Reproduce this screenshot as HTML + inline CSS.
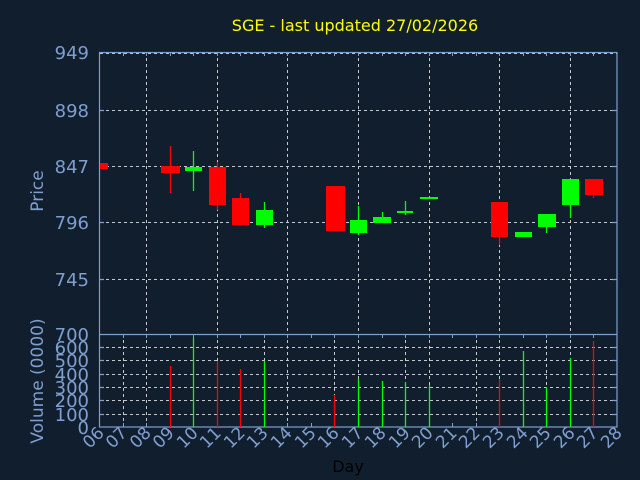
<!DOCTYPE html>
<html><head><style>html,body{margin:0;padding:0;background:#111e2e;}svg{display:block}</style></head>
<body>
<svg width="640" height="480" xmlns="http://www.w3.org/2000/svg" font-family="DejaVu Sans, Liberation Sans, sans-serif">
<rect width="640" height="480" fill="#111e2e"/>
<text x="355" y="31" fill="#ffff00" font-size="16" text-anchor="middle">SGE - last updated 27/02/2026</text>
<g stroke="#c8c8c8" stroke-width="1" stroke-dasharray="3,3" fill="none">
<path d="M100 53.5H617M100 110.5H617M100 166.5H617M100 222.5H617M100 279.5H617"/>
<path d="M100 347.5H617M100 360.5H617M100 374.5H617M100 387.5H617M100 400.5H617M100 414.5H617"/>
<path d="M146.5 52V427M217.5 52V427M287.5 52V427M358.5 52V427M429.5 52V427M499.5 52V427M570.5 52V427"/>
<path d="M123.5 334V427M193.5 334V427M264.5 334V427M334.5 334V427M405.5 334V427M476.5 334V427M546.5 334V427"/>
</g>
<g stroke="#7f9fcf" stroke-width="1.2" fill="none">
<rect x="99.5" y="52.5" width="517.5" height="374.5"/>
<path d="M99.5 334.5H617"/>
<path d="M99 110.5h5M99 166.5h5M99 222.5h5M99 279.5h5M612 110.5h5M612 166.5h5M612 222.5h5M612 279.5h5"/>
<path d="M99 347.5h5M99 360.5h5M99 374.5h5M99 387.5h5M99 400.5h5M99 414.5h5M612 347.5h5M612 360.5h5M612 374.5h5M612 387.5h5M612 400.5h5M612 414.5h5"/>
</g>
<g fill="#7f9fcf" font-size="18" text-anchor="end">
<text x="89" y="59">949</text><text x="89" y="117">898</text><text x="89" y="173">847</text><text x="89" y="229">796</text><text x="89" y="286">745</text>
<text x="89" y="341">700</text><text x="89" y="354">600</text><text x="89" y="367">500</text><text x="89" y="381">400</text><text x="89" y="394">300</text><text x="89" y="407">200</text><text x="89" y="421">100</text><text x="89" y="434">0</text>
</g>
<text transform="translate(43,191) rotate(-90)" fill="#7f9fcf" font-size="17" text-anchor="middle">Price</text>
<text transform="translate(43,381) rotate(-90)" fill="#7f9fcf" font-size="17" text-anchor="middle">Volume (0000)</text>
<text x="348" y="472" fill="#000" font-size="16" text-anchor="middle">Day</text>
<g fill="#7f9fcf" font-size="17" text-anchor="end">
<text transform="translate(105,434) rotate(-45)">06</text>
<text transform="translate(128,434) rotate(-45)">07</text>
<text transform="translate(152,434) rotate(-45)">08</text>
<text transform="translate(175,434) rotate(-45)">09</text>
<text transform="translate(199,434) rotate(-45)">10</text>
<text transform="translate(222,434) rotate(-45)">11</text>
<text transform="translate(246,434) rotate(-45)">12</text>
<text transform="translate(269,434) rotate(-45)">13</text>
<text transform="translate(293,434) rotate(-45)">14</text>
<text transform="translate(317,434) rotate(-45)">15</text>
<text transform="translate(340,434) rotate(-45)">16</text>
<text transform="translate(364,434) rotate(-45)">17</text>
<text transform="translate(387,434) rotate(-45)">18</text>
<text transform="translate(411,434) rotate(-45)">19</text>
<text transform="translate(434,434) rotate(-45)">20</text>
<text transform="translate(458,434) rotate(-45)">21</text>
<text transform="translate(481,434) rotate(-45)">22</text>
<text transform="translate(505,434) rotate(-45)">23</text>
<text transform="translate(529,434) rotate(-45)">24</text>
<text transform="translate(552,434) rotate(-45)">25</text>
<text transform="translate(576,434) rotate(-45)">26</text>
<text transform="translate(599,434) rotate(-45)">27</text>
<text transform="translate(623,434) rotate(-45)">28</text>
</g>
<g stroke="#7f9fcf" stroke-width="1">
<path d="M123.5 52v4M146.5 52v4M170.5 52v4M193.5 52v4M217.5 52v4M240.5 52v4M264.5 52v4M287.5 52v4M311.5 52v4M334.5 52v4M358.5 52v4M382.5 52v4M405.5 52v4M429.5 52v4M452.5 52v4M476.5 52v4M499.5 52v4M523.5 52v4M546.5 52v4M570.5 52v4M593.5 52v4"/>
<path d="M123.5 427v-4M146.5 427v-4M170.5 427v-4M193.5 427v-4M217.5 427v-4M240.5 427v-4M264.5 427v-4M287.5 427v-4M311.5 427v-4M334.5 427v-4M358.5 427v-4M382.5 427v-4M405.5 427v-4M429.5 427v-4M452.5 427v-4M476.5 427v-4M499.5 427v-4M523.5 427v-4M546.5 427v-4M570.5 427v-4M593.5 427v-4"/>
<path d="M123.5 334v4M146.5 334v4M170.5 334v4M193.5 334v4M217.5 334v4M240.5 334v4M264.5 334v4M287.5 334v4M311.5 334v4M334.5 334v4M358.5 334v4M382.5 334v4M405.5 334v4M429.5 334v4M452.5 334v4M476.5 334v4M499.5 334v4M523.5 334v4M546.5 334v4M570.5 334v4M593.5 334v4"/>
</g>
<g stroke-width="1.3">
<rect x="100" y="163" width="8" height="6" fill="#ff0000"/>
<path d="M170.5 146V193" stroke="#ff0000"/><rect x="161" y="166" width="19" height="7" fill="#ff0000"/>
<path d="M193.5 151V191" stroke="#00ff00"/><rect x="185" y="167" width="17" height="4" fill="#00ff00"/>
<path d="M217.5 162V210" stroke="#ff0000"/><rect x="209" y="167" width="17" height="38" fill="#ff0000"/>
<path d="M240.5 193V225" stroke="#ff0000"/><rect x="232" y="198" width="17" height="27" fill="#ff0000"/>
<path d="M264.5 202V228" stroke="#00ff00"/><rect x="256" y="210" width="17" height="15" fill="#00ff00"/>
<rect x="326" y="186" width="19" height="45" fill="#ff0000"/>
<path d="M358.5 206V235" stroke="#00ff00"/><rect x="350" y="220" width="17" height="13" fill="#00ff00"/>
<path d="M382.5 212V223" stroke="#00ff00"/><rect x="373" y="217" width="18" height="6" fill="#00ff00"/>
<path d="M405.5 201V215" stroke="#00ff00"/><rect x="397" y="211" width="16" height="2" fill="#00ff00"/>
<rect x="420" y="197" width="18" height="2" fill="#00ff00"/>
<path d="M499.5 202V245" stroke="#ff0000"/><rect x="491" y="202" width="17" height="35" fill="#ff0000"/>
<rect x="515" y="232" width="17" height="5" fill="#00ff00"/>
<path d="M546.5 214V233" stroke="#00ff00"/><rect x="538" y="214" width="18" height="13" fill="#00ff00"/>
<path d="M570.5 179V218" stroke="#00ff00"/><rect x="562" y="179" width="17" height="26" fill="#00ff00"/>
<path d="M593.5 179V198" stroke="#ff0000"/><rect x="585" y="179" width="18" height="16" fill="#ff0000"/>
</g>
<g stroke-width="1.3">
<path d="M170.5 366V427M217.5 361V427M240.5 369V427M334.5 395V427M499.5 379V427M593.5 341V427" stroke="#ff0000"/>
<path d="M193.5 338V427M264.5 361V427M358.5 379V427M382.5 381V427M405.5 382V427M429.5 385V427M523.5 351V427M546.5 387V427M570.5 358V427" stroke="#00ff00"/>
</g>
</svg>
</body></html>
